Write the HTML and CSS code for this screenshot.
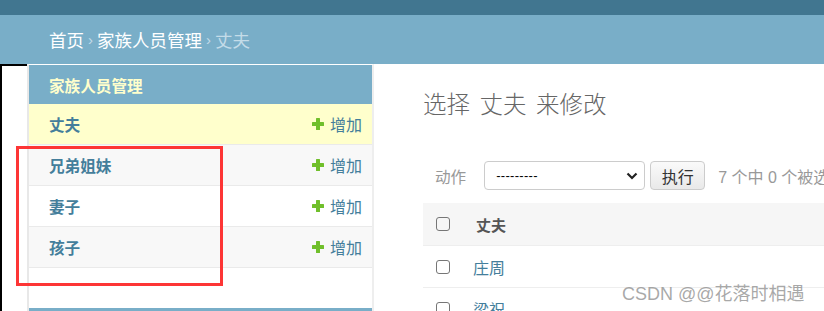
FILE: index.html
```html
<!DOCTYPE html>
<html lang="zh">
<head>
<meta charset="utf-8">
<title>选择 丈夫 来修改</title>
<link rel="stylesheet" href="styles.css">
</head>
<body>
<div class="topbar"></div>
<div class="breadcrumbs">
  <a class="crumb" href="#">首页</a><span class="sep">›</span><a class="crumb" href="#">家族人员管理</a><span class="sep">›</span><span class="crumb-current">丈夫</span>
</div>
<div class="main">
  <div class="gutter"></div>
  <nav class="sidebar">
    <div class="module">
      <div class="caption">家族人员管理</div>
      <div class="row current"><a class="model" href="#">丈夫</a><a class="add" href="#"><svg class="plus" viewBox="0 0 12 12" width="12" height="12"><rect x="4" y="0" width="4" height="12" rx="0.5"/><rect x="0" y="4" width="12" height="4" rx="0.5"/></svg>增加</a></div>
      <div class="row alt"><a class="model" href="#">兄弟姐妹</a><a class="add" href="#"><svg class="plus" viewBox="0 0 12 12" width="12" height="12"><rect x="4" y="0" width="4" height="12" rx="0.5"/><rect x="0" y="4" width="12" height="4" rx="0.5"/></svg>增加</a></div>
      <div class="row"><a class="model" href="#">妻子</a><a class="add" href="#"><svg class="plus" viewBox="0 0 12 12" width="12" height="12"><rect x="4" y="0" width="4" height="12" rx="0.5"/><rect x="0" y="4" width="12" height="4" rx="0.5"/></svg>增加</a></div>
      <div class="row alt"><a class="model" href="#">孩子</a><a class="add" href="#"><svg class="plus" viewBox="0 0 12 12" width="12" height="12"><rect x="4" y="0" width="4" height="12" rx="0.5"/><rect x="0" y="4" width="12" height="4" rx="0.5"/></svg>增加</a></div>
    </div>
    <div class="module-next"></div>
  </nav>
  <div class="content">
    <h1 class="title">选择 丈夫 来修改</h1>
    <div class="actions">
      <span class="label">动作</span>
      <div class="select"><span class="select-text">---------</span><svg class="chev" viewBox="0 0 12 8" width="12" height="8"><path d="M1.5 1.5 L6 6 L10.5 1.5" fill="none" stroke="#222" stroke-width="2.2"/></svg></div>
      <button class="go" type="button">执行</button>
      <span class="counter">7 个中 0 个被选中</span>
    </div>
    <div class="results">
      <div class="thead"><span class="cb"></span><span class="th">丈夫</span></div>
      <div class="tr"><span class="cb"></span><a class="td" href="#">庄周</a></div>
      <div class="tr"><span class="cb"></span><a class="td" href="#">梁祝</a></div>
    </div>
  </div>
</div>
<div class="highlight"></div>
<div class="watermark">CSDN @@花落时相遇</div>
</body>
</html>
```
FILE: styles.css
```css
html, body {
  margin: 0;
  padding: 0;
  background: #fff;
  overflow: hidden;
}
body {
  width: 824px;
  height: 311px;
  position: relative;
  font-family: "Liberation Sans", "Noto Sans CJK SC", sans-serif;
  font-size: 15.6px;
  color: #333;
}
a { text-decoration: none; }

.topbar {
  height: 15px;
  background: #417690;
}
.breadcrumbs {
  height: 49px;
  background: #79aec8;
  display: flex;
  align-items: center;
  padding-left: 49px;
  font-size: 17.5px;
  box-sizing: border-box;
}
.crumb { color: #fff; }
.sep { color: #c4dce8; margin: 0 4px 0 4px; font-size: 15px; }
.crumb-current { color: #c4dce8; }

.main {
  display: flex;
  height: 247px;
}
.gutter {
  width: 25px;
  border-top: 2px solid #000;
  border-left: 2px solid #000;
}
.sidebar {
  width: 343px;
  border-left: 2px solid #e8e8e8;
  border-right: 2px solid #eeeeee;
  border-top: 1px solid #fff;
  display: flex;
  flex-direction: column;
}
.module { display: flex; flex-direction: column; }
.caption {
  height: 39px;
  background: #79aec8;
  color: #ffffcc;
  font-weight: bold;
  font-size: 15.6px;
  display: flex;
  align-items: center;
  padding-left: 20px;
}
.row {
  height: 40px;
  border-bottom: 1px solid #eaeaea;
  display: flex;
  align-items: center;
  justify-content: space-between;
  padding: 0 10px 0 20px;
  background: #fff;
}
.row.alt { background: #f8f8f8; }
.row.current { background: #ffffcc; }
.model {
  color: #447e9b;
  font-weight: bold;
  font-size: 15.6px;
}
.add {
  color: #447e9b;
  font-size: 16px;
  display: flex;
  align-items: center;
  gap: 6px;
}
.plus { fill: #70bf2b; }
.module-next {
  margin-top: auto;
  height: 3px;
  background: #79aec8;
}

.content {
  flex: 1;
  padding: 26px 0 0 49px;
  overflow: hidden;
}
.title {
  margin: 0;
  font-size: 23.5px;
  font-weight: 300;
  color: #666;
  line-height: 30px;
  white-space: nowrap;
  word-spacing: 3px;
}
.actions {
  margin-top: 41px;
  height: 29px;
  display: flex;
  align-items: center;
  padding-left: 12px;
  white-space: nowrap;
}
.label {
  color: #999;
  font-size: 15.6px;
  margin-right: 18px;
}
.select {
  height: 27px;
  border: 1px solid #ccc;
  border-radius: 4px;
  display: flex;
  align-items: center;
  justify-content: space-between;
  padding: 0 6px 0 11px;
  width: 142px;
  flex: none;
}
.select-text {
  color: #000;
  font-size: 13px;
  letter-spacing: 0.3px;
}
.go {
  margin-left: 5px;
  width: 55px;
  height: 29px;
  border: 1px solid #ccc;
  border-radius: 4px;
  background: linear-gradient(#fafafa, #e9e9e9);
  font-family: "Liberation Sans", "Noto Sans CJK SC", sans-serif;
  font-size: 16px;
  color: #333;
  padding: 0;
  flex: none;
}
.counter {
  margin-left: 13px;
  color: #999;
  font-size: 16px;
}
.results {
  margin-top: 13px;
}
.thead {
  height: 42px;
  background: #f6f6f6;
  border-bottom: 1px solid #eee;
  display: flex;
  align-items: center;
  padding-left: 13px;
}
.tr {
  height: 41px;
  border-bottom: 1px solid #eee;
  display: flex;
  align-items: center;
  padding-left: 13px;
}
.cb {
  width: 12px;
  height: 12px;
  border: 1.5px solid #767676;
  border-radius: 3px;
  flex: none;
}
.th {
  margin-left: 26px;
  color: #555;
  font-weight: bold;
  font-size: 15px;
}
.td {
  margin-left: 23px;
  color: #447e9b;
  font-size: 16px;
}

.highlight {
  position: absolute;
  left: 16px;
  top: 146px;
  width: 201px;
  height: 134px;
  border: 3px solid #fd3535;
}
.watermark {
  position: absolute;
  left: 622px;
  top: 279px;
  font-size: 18px;
  color: rgba(140, 140, 140, 0.75);
  white-space: nowrap;
}
```
